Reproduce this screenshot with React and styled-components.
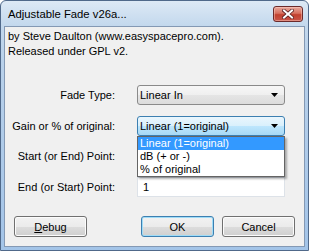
import React from 'react'
import styled, { createGlobalStyle } from 'styled-components'

const GlobalStyle = createGlobalStyle`
    html, body {
        margin: 0;
        padding: 0;
        background: #fff;
    }

    body {
        font-family: "Liberation Sans", Arial, sans-serif;
        font-size: 11px;
        color: #000;
    }
`

const Window = styled.div`
    width: 309px;
    height: 251px;
    box-sizing: border-box;
    display: flex;
    flex-direction: column;
    border: 1px solid #50698a;
    border-radius: 6px 6px 0 0;
    background: linear-gradient(to bottom, #dde9f5 0, #c3d8ed 25px, #b9d1ea 60px, #a3c4e8 100%);
    overflow: hidden;
`

const TitleBar = styled.div`
    height: 25px;
    flex-shrink: 0;
    display: flex;
    align-items: center;
    justify-content: space-between;
    padding: 0 5px 0 7px;
`

const Title = styled.span`
    font-size: 11.3px;
    color: #000;
`

const CloseButton = styled.div`
    width: 30px;
    height: 16px;
    box-sizing: border-box;
    margin-top: 1px;
    display: flex;
    align-items: center;
    justify-content: center;
    border: 1px solid #6b2a2a;
    border-radius: 3px;
    background: linear-gradient(to bottom, #e8a89c 0%, #d7705f 45%, #c2412f 55%, #c9564a 100%);
    box-shadow: inset 0 0 0 1px rgba(255, 210, 200, 0.45);
`

const Client = styled.div`
    flex: 1;
    margin: 0 3px 3px 3px;
    box-sizing: border-box;
    border: 1px solid #8499b4;
    background: #f0f0f0;
    display: flex;
    flex-direction: column;
    padding: 2px 0 9px 0;
`

const Intro = styled.p`
    margin: 0;
    padding-left: 3px;
    line-height: 15px;
`

const Form = styled.div`
    margin-top: 26px;
    display: grid;
    grid-template-columns: 110px 148px;
    grid-auto-rows: 20px;
    column-gap: 22px;
    row-gap: 10.5px;
`

const Label = styled.label`
    display: flex;
    align-items: center;
    justify-content: flex-end;
    white-space: nowrap;
`

const ComboWrap = styled.div`
    position: relative;
    z-index: ${p => (p.$open ? 2 : 1)};
`

const Combo = styled.div`
    height: 20px;
    box-sizing: border-box;
    display: flex;
    align-items: center;
    justify-content: space-between;
    padding: 0 6px 0 2px;
    border: 1px solid ${p => (p.$focused ? '#3c7fb1' : '#8a8a8a')};
    border-radius: 3px;
    background: ${p => p.$focused
        ? 'linear-gradient(to bottom, #eaf6fd 0%, #d9f0fc 50%, #bee6fd 50%, #a7d9f5 100%)'
        : 'linear-gradient(to bottom, #f7f7f7 0%, #efefef 50%, #e5e5e5 50%, #dcdcdc 100%)'};
`

const DropList = styled.ul`
    position: absolute;
    top: 100%;
    left: 0;
    width: 148px;
    box-sizing: border-box;
    margin: 0;
    padding: 0;
    list-style: none;
    border: 1px solid #646464;
    background: #fff;
    box-shadow: 2px 2px 2px rgba(0, 0, 0, 0.3);
`

const DropItem = styled.li`
    height: 13px;
    line-height: 13px;
    padding-left: 2px;
    white-space: nowrap;
    color: ${p => (p.$selected ? '#fff' : '#000')};
    background: ${p => (p.$selected ? '#3399ff' : 'transparent')};
`

const Edit = styled.div`
    height: 20px;
    box-sizing: border-box;
    display: flex;
    align-items: center;
    padding-left: 5px;
    border: 1px solid #dde2e8;
    border-top-color: #cfd5dd;
    background: #fff;
`

const ButtonRow = styled.div`
    margin-top: auto;
    display: flex;
    justify-content: space-between;
    padding: 0 9px;
`

const ButtonGroup = styled.div`
    display: flex;
    gap: 8px;
`

const Button = styled.button`
    width: 73px;
    height: 21px;
    box-sizing: border-box;
    padding: 0;
    font: inherit;
    color: #000;
    border: 1px solid ${p => (p.$default ? '#3c7fb1' : '#707070')};
    border-radius: 3px;
    background: linear-gradient(to bottom, #f2f2f2 0%, #ebebeb 50%, #dddddd 50%, #cfcfcf 100%);
    box-shadow: ${p => (p.$default ? 'inset 0 0 0 1px #9fdcf7' : 'inset 0 0 0 1px #fcfcfc')};

    u {
        text-decoration: underline;
    }
`

const Arrow = () => (
    <svg width='7' height='4' viewBox='0 0 7 4'>
        <path d='M0 0 H7 L3.5 4 Z' fill='#000'/>
    </svg>
)

const CloseGlyph = () => (
    <svg width='12' height='10' viewBox='0 0 12 10'>
        <path d='M2 1.5 L10 8.5 M10 1.5 L2 8.5' stroke='#5a2020' strokeWidth='3.6' strokeLinecap='square'/>
        <path d='M2 1.5 L10 8.5 M10 1.5 L2 8.5' stroke='#fff' strokeWidth='2' strokeLinecap='square'/>
    </svg>
)

const gainOptions = ['Linear (1=original)', 'dB (+ or -)', '% of original']

const App = () => {
    return (
        <>
            <GlobalStyle/>
            <Window>
                <TitleBar>
                    <Title>Adjustable Fade v26a...</Title>
                    <CloseButton><CloseGlyph/></CloseButton>
                </TitleBar>
                <Client>
                    <Intro>
                        by Steve Daulton (www.easyspacepro.com).<br/>
                        Released under GPL v2.
                    </Intro>
                    <Form>
                        <Label>Fade Type:</Label>
                        <ComboWrap>
                            <Combo>
                                <span>Linear In</span>
                                <Arrow/>
                            </Combo>
                        </ComboWrap>

                        <Label>Gain or % of original:</Label>
                        <ComboWrap $open>
                            <Combo $focused>
                                <span>Linear (1=original)</span>
                                <Arrow/>
                            </Combo>
                            <DropList>
                                {gainOptions.map((opt, i) => (
                                    <DropItem key={opt} $selected={i === 0}>{opt}</DropItem>
                                ))}
                            </DropList>
                        </ComboWrap>

                        <Label>Start (or End) Point:</Label>
                        <Edit/>

                        <Label>End (or Start) Point:</Label>
                        <Edit>1</Edit>
                    </Form>
                    <ButtonRow>
                        <Button><u>D</u>ebug</Button>
                        <ButtonGroup>
                            <Button $default>OK</Button>
                            <Button>Cancel</Button>
                        </ButtonGroup>
                    </ButtonRow>
                </Client>
            </Window>
        </>
    )
}

export default App
